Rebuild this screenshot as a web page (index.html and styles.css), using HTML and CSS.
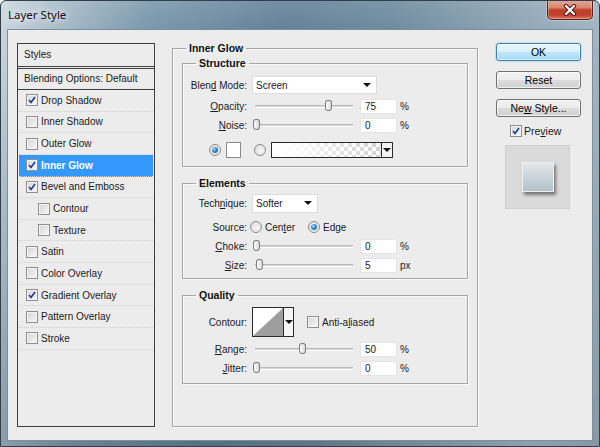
FILE: index.html
```html
<!DOCTYPE html>
<html>
<head>
<meta charset="utf-8">
<title>Layer Style</title>
<link rel="stylesheet" href="styles.css">
</head>
<body>
<div class="window">
  <div class="titlebar">
    <span class="title">Layer Style</span>
    <div class="close">
      <svg width="16" height="12" viewBox="0 0 16 12">
        <path d="M4 2 L12 10 M12 2 L4 10" stroke="#4a1c14" stroke-width="4.2" stroke-linecap="round"/>
        <path d="M4 2 L12 10 M12 2 L4 10" stroke="#ffffff" stroke-width="2.2" stroke-linecap="round"/>
      </svg>
    </div>
  </div>
  <div class="client">
    <div class="styles-panel">
      <div class="sp-head">Styles</div>
      <div class="sp-blend">Blending Options: Default</div>
      <ul class="sp-list">
        <li class="sp-item"><span class="cb checked"><svg width="10" height="10" viewBox="0 0 10 10"><path d="M2 5 L4 7.5 L8 2" fill="none" stroke="#20379a" stroke-width="1.6"/></svg></span>Drop Shadow</li>
        <li class="sp-item"><span class="cb"></span>Inner Shadow</li>
        <li class="sp-item"><span class="cb"></span>Outer Glow</li>
        <li class="sp-item selected"><span class="cb checked"><svg width="10" height="10" viewBox="0 0 10 10"><path d="M2 5 L4 7.5 L8 2" fill="none" stroke="#20379a" stroke-width="1.6"/></svg></span>Inner Glow</li>
        <li class="sp-item"><span class="cb checked"><svg width="10" height="10" viewBox="0 0 10 10"><path d="M2 5 L4 7.5 L8 2" fill="none" stroke="#20379a" stroke-width="1.6"/></svg></span>Bevel and Emboss</li>
        <li class="sp-item indent"><span class="cb"></span>Contour</li>
        <li class="sp-item indent"><span class="cb"></span>Texture</li>
        <li class="sp-item"><span class="cb"></span>Satin</li>
        <li class="sp-item"><span class="cb"></span>Color Overlay</li>
        <li class="sp-item"><span class="cb checked"><svg width="10" height="10" viewBox="0 0 10 10"><path d="M2 5 L4 7.5 L8 2" fill="none" stroke="#20379a" stroke-width="1.6"/></svg></span>Gradient Overlay</li>
        <li class="sp-item"><span class="cb"></span>Pattern Overlay</li>
        <li class="sp-item"><span class="cb"></span>Stroke</li>
      </ul>
    </div>

    <fieldset class="group main">
      <legend>Inner Glow</legend>

      <fieldset class="group sub structure">
        <legend>Structure</legend>
        <div class="row first">
          <span class="lbl">Blen<u>d</u> Mode:</span>
          <div class="select wide"><span>Screen</span><span class="arrow"></span></div>
        </div>
        <div class="row gap3">
          <span class="lbl"><u>O</u>pacity:</span>
          <div class="slider"><div class="track"></div><div class="thumb" style="left:73px"></div></div>
          <div class="num">75</div><span class="unit">%</span>
        </div>
        <div class="row gap1">
          <span class="lbl"><u>N</u>oise:</span>
          <div class="slider"><div class="track"></div><div class="thumb" style="left:1px"></div></div>
          <div class="num">0</div><span class="unit">%</span>
        </div>
        <div class="row color-row">
          <span class="radio on"></span>
          <span class="swatch"></span>
          <span class="radio second"></span>
          <div class="gradbox"><span class="grad"></span><span class="gradarrow"><span class="arrow"></span></span></div>
        </div>
      </fieldset>

      <fieldset class="group sub elements">
        <legend>Elements</legend>
        <div class="row first-e">
          <span class="lbl">Tech<u>n</u>ique:</span>
          <div class="select narrow"><span>Softer</span><span class="arrow"></span></div>
        </div>
        <div class="row source">
          <span class="lbl">Source:</span>
          <span class="radio src1"></span><span class="opt">Cen<u>t</u>er</span>
          <span class="radio on src2"></span><span class="opt">Ed<u>g</u>e</span>
        </div>
        <div class="row">
          <span class="lbl"><u>C</u>hoke:</span>
          <div class="slider"><div class="track"></div><div class="thumb" style="left:1px"></div></div>
          <div class="num">0</div><span class="unit">%</span>
        </div>
        <div class="row gap1">
          <span class="lbl"><u>S</u>ize:</span>
          <div class="slider"><div class="track"></div><div class="thumb" style="left:4px"></div></div>
          <div class="num">5</div><span class="unit">px</span>
        </div>
      </fieldset>

      <fieldset class="group sub quality">
        <legend>Quality</legend>
        <div class="row contour-row">
          <span class="lbl">Contour:</span>
          <div class="contour">
            <svg class="curve" width="30" height="28" viewBox="0 0 30 28"><rect width="30" height="28" fill="#fff"/><polygon points="0,28 30,0 30,28" fill="#9e9e9e"/></svg>
            <span class="contour-arrow"><span class="arrow"></span></span>
          </div>
          <span class="cb aa"></span><span class="opt">Anti-a<u>l</u>iased</span>
        </div>
        <div class="row gap3">
          <span class="lbl"><u>R</u>ange:</span>
          <div class="slider"><div class="track"></div><div class="thumb" style="left:47px"></div></div>
          <div class="num">50</div><span class="unit">%</span>
        </div>
        <div class="row gap1">
          <span class="lbl"><u>J</u>itter:</span>
          <div class="slider"><div class="track"></div><div class="thumb" style="left:1px"></div></div>
          <div class="num">0</div><span class="unit">%</span>
        </div>
      </fieldset>
    </fieldset>

    <div class="actions">
      <div class="btn default">OK</div>
      <div class="btn">Reset</div>
      <div class="btn">Ne<u>w</u> Style...</div>
      <div class="preview-row"><span class="cb checked"><svg width="10" height="10" viewBox="0 0 10 10"><path d="M2 5 L4 7.5 L8 2" fill="none" stroke="#20379a" stroke-width="1.6"/></svg></span><span class="opt">Pre<u>v</u>iew</span></div>
      <div class="preview-box"><div class="preview-square"></div></div>
    </div>
  </div>
</div>
</body>
</html>
```

FILE: styles.css
```css
* { box-sizing: border-box; }
html, body { margin: 0; padding: 0; background: #ffffff; }
body {
  font-family: "Liberation Sans", Arial, sans-serif;
  font-size: 10px;
  color: #1b1b1b;
}
u { text-decoration: underline; text-underline-offset: 1px; }

.window {
  width: 600px;
  height: 447px;
  display: flex;
  flex-direction: column;
  border: 1px solid #2f3f4b;
  border-radius: 6px 6px 0 0;
  background:
    linear-gradient(180deg, rgba(255,255,255,0.12) 0%, rgba(0,0,0,0) 8%, rgba(0,0,0,0.12) 100%),
    linear-gradient(100deg, #cbd7df 0%, #a7bac7 9%, #7897ab 22%, #5f7f96 42%, #6a889c 58%, #8ba3b3 76%, #a2b5c2 90%, #98adbb 100%);
  overflow: hidden;
}

.titlebar {
  height: 28px;
  flex: none;
  display: flex;
  align-items: flex-start;
}
.title {
  font-family: "Noto Sans", "Liberation Sans", sans-serif;
  font-size: 11.5px;
  line-height: 14px;
  color: #111;
  padding: 7px 0 0 7px;
  text-shadow: 0 0 6px rgba(255,255,255,0.95), 0 0 10px rgba(255,255,255,0.8);
}
.close {
  margin-left: auto;
  margin-right: 6px;
  margin-top: -1px;
  width: 46px;
  height: 20px;
  border: 1px solid #5b2117;
  border-top: none;
  border-radius: 0 0 5px 5px;
  background: linear-gradient(180deg, #e7a898 0%, #da8470 40%, #c2402b 52%, #c0402a 78%, #d8755f 100%);
  box-shadow: inset 0 0 0 1px rgba(255,230,220,0.35), 0 0 0 1px rgba(255,255,255,0.3);
  display: flex;
  align-items: center;
  justify-content: center;
}

.client {
  height: 412px;
  flex: none;
  margin: 0 6px;
  border: 1px solid #7a8fa0;
  background: #ececec;
  display: flex;
  align-items: flex-start;
  padding: 12px 0 0 9px;
}

/* Left styles list */
.styles-panel {
  width: 138px;
  height: 384px;
  margin-top: 1px;
  border: 1px solid #3e3e3e;
  background: #ececec;
  flex: none;
}
.sp-head {
  height: 23px;
  line-height: 22px;
  padding-left: 6px;
  border-bottom: 1px solid #3e3e3e;
}
.sp-blend {
  height: 22px;
  margin-top: 1px;
  line-height: 20px;
  padding-left: 6px;
  border-top: 1px solid #3e3e3e;
  border-bottom: 1px solid #3e3e3e;
}
.sp-list { list-style: none; margin: 0; padding: 0; }
.sp-item {
  height: 21.65px;
  display: flex;
  align-items: center;
  gap: 3px;
  padding-left: 7px;
  border-bottom: 1px dotted #d2d2d2;
  margin: 0 1px;
}
.sp-item.indent { padding-left: 19px; }
.sp-item.selected {
  background: #3399ff;
  color: #ffffff;
  font-weight: bold;
}

/* checkbox */
.cb {
  width: 12px;
  height: 12px;
  flex: none;
  display: inline-flex;
  align-items: center;
  justify-content: center;
  border: 1px solid #8e8f8f;
  background: linear-gradient(135deg, #d6d6d6 0%, #f7f7f7 100%);
  box-shadow: inset 0 0 0 1px #f4f4f4;
}
.cb svg { display: block; }

/* group boxes */
.group {
  margin: 0;
  padding: 0;
  min-width: 0;
  border: 1px solid #a7a7a7;
  box-shadow: 1px 1px 0 #fbfbfb, inset 1px 1px 0 #fbfbfb;
}
.group > legend {
  font-weight: bold;
  font-size: 10.5px;
  line-height: 12px;
  padding: 0 3px;
  margin-left: 13px;
  color: #111;
}
.main {
  width: 306px;
  height: 385px;
  margin-left: 17px;
  flex: none;
}
.sub {
  width: 286px;
  margin: 0 0 0 9px;
}
.structure { margin-top: 3px; padding: 7px 0 7px 0; }
.elements { margin-top: 10px; padding: 5px 0 4px 0; }
.quality { margin-top: 10px; padding: 6px 0 6px 0; }

.row {
  height: 18px;
  display: flex;
  align-items: center;
}
.gap3 { margin-top: 3px; }
.gap1 { margin-top: 1px; }
.lbl {
  width: 64px;
  flex: none;
  text-align: right;
  white-space: nowrap;
}

.select {
  margin-left: 5px;
  height: 18px;
  background: #ffffff;
  border: 1px solid #dcdcdc;
  display: flex;
  align-items: center;
  justify-content: space-between;
  padding: 0 5px 0 3px;
}
.select.wide { width: 125px; }
.select.narrow { width: 66px; height: 19px; }
.arrow {
  width: 0;
  height: 0;
  border-left: 4px solid transparent;
  border-right: 4px solid transparent;
  border-top: 4px solid #111;
}

.slider {
  position: relative;
  width: 104px;
  height: 18px;
  margin-left: 5px;
  flex: none;
}
.track {
  margin: 8px 3px 0 3px;
  height: 3px;
  border-top: 1px solid #b9b9b9;
  border-bottom: 1px solid #ffffff;
  background: #d8d8d8;
}
.thumb {
  position: absolute;
  top: 3px;
  width: 7px;
  height: 11px;
  border: 1px solid #7c7c7c;
  border-radius: 3px 3px 3px 3px / 3px 3px 4px 4px;
  background: linear-gradient(90deg, #ffffff, #d9d9d9);
}
.num {
  margin-left: 4px;
  width: 37px;
  height: 15px;
  background: #ffffff;
  border: 1px solid #e4e4e4;
  padding-left: 4px;
  line-height: 13px;
  flex: none;
}
.unit { margin-left: 3px; }

.radio {
  width: 12px;
  height: 12px;
  flex: none;
  border-radius: 50%;
  border: 1px solid #8b8b8b;
  background: radial-gradient(circle at 60% 60%, #f6f6f6 0%, #dadada 100%);
  display: inline-flex;
  align-items: center;
  justify-content: center;
}
.radio.on::after {
  content: "";
  width: 6px;
  height: 6px;
  border-radius: 50%;
  background: radial-gradient(circle at 35% 35%, #b4e2ff 0%, #2a8ad0 45%, #0d4f8c 100%);
}

.color-row { margin-top: 7px; padding-left: 26px; }
.swatch {
  margin-left: 5px;
  width: 15px;
  height: 16px;
  background: #ffffff;
  border: 1px solid #8a8a8a;
}
.radio.second { margin-left: 13px; }
.gradbox {
  margin-left: 5px;
  height: 16px;
  display: flex;
  border: 1px solid #2a2a2a;
}
.grad {
  width: 110px;
  height: 14px;
  background:
    linear-gradient(90deg, #ffffff 0%, rgba(255,255,255,0.9) 20%, rgba(255,255,255,0) 100%),
    repeating-conic-gradient(#d0d0d0 0% 25%, #ffffff 0% 50%) 0 0 / 8px 8px;
  border-right: 1px solid #2a2a2a;
}
.gradarrow {
  width: 10px;
  height: 14px;
  background: #f4f4f4;
  display: flex;
  align-items: center;
  justify-content: center;
}

.source { height: 20px; margin-top: 5px; }
.src1 { margin-left: 3px; }
.src2 { margin-left: 13px; }
.opt { margin-left: 3px; white-space: nowrap; }

.contour-row { height: 30px; }
.contour {
  margin-left: 5px;
  height: 30px;
  display: flex;
  border: 1px solid #2a2a2a;
  flex: none;
}
.curve { display: block; }
.contour-arrow {
  width: 10px;
  border-left: 1px solid #2a2a2a;
  background: #f4f4f4;
  display: flex;
  align-items: center;
  justify-content: center;
}
.cb.aa { margin-left: 13px; }

/* right column */
.actions {
  margin-left: 18px;
  width: 85px;
  flex: none;
  padding-top: 1px;
  display: flex;
  flex-direction: column;
}
.btn {
  height: 18px;
  line-height: 16px;
  text-align: center;
  color: #000;
  font-size: 10.5px;
  border: 1px solid #707070;
  border-radius: 3px;
  background: linear-gradient(180deg, #f2f2f2 0%, #ebebeb 50%, #dddddd 51%, #cfcfcf 100%);
  box-shadow: inset 0 0 0 1px rgba(255,255,255,0.7);
  margin-bottom: 10px;
}
.btn.default {
  border-color: #3c7fb1;
  background: linear-gradient(180deg, #eaf6fd 0%, #d9f0fc 50%, #bee6fd 51%, #a7d9f5 100%);
  box-shadow: inset 0 0 0 1px rgba(255,255,255,0.6), 0 0 2px #6ec0f0;
}
.btn:nth-child(3) { margin-bottom: 0; }
.preview-row {
  margin-top: 7px;
  height: 14px;
  padding-left: 14px;
  display: flex;
  align-items: center;
  font-size: 10.5px;
}
.preview-row .opt { margin-left: 2px; }
.preview-box {
  margin-top: 7px;
  margin-left: 9px;
  width: 65px;
  height: 64px;
  border: 1px solid #cfcfcf;
  background: #dadada;
  display: flex;
  align-items: center;
  justify-content: center;
}
.preview-square {
  width: 32px;
  height: 30px;
  border: 1px solid #eef2f5;
  background: linear-gradient(180deg, #e2e8ec 0%, #cad4da 50%, #b5c1c9 100%);
  box-shadow: 2px 3px 3px rgba(0,0,0,0.45);
}
```
